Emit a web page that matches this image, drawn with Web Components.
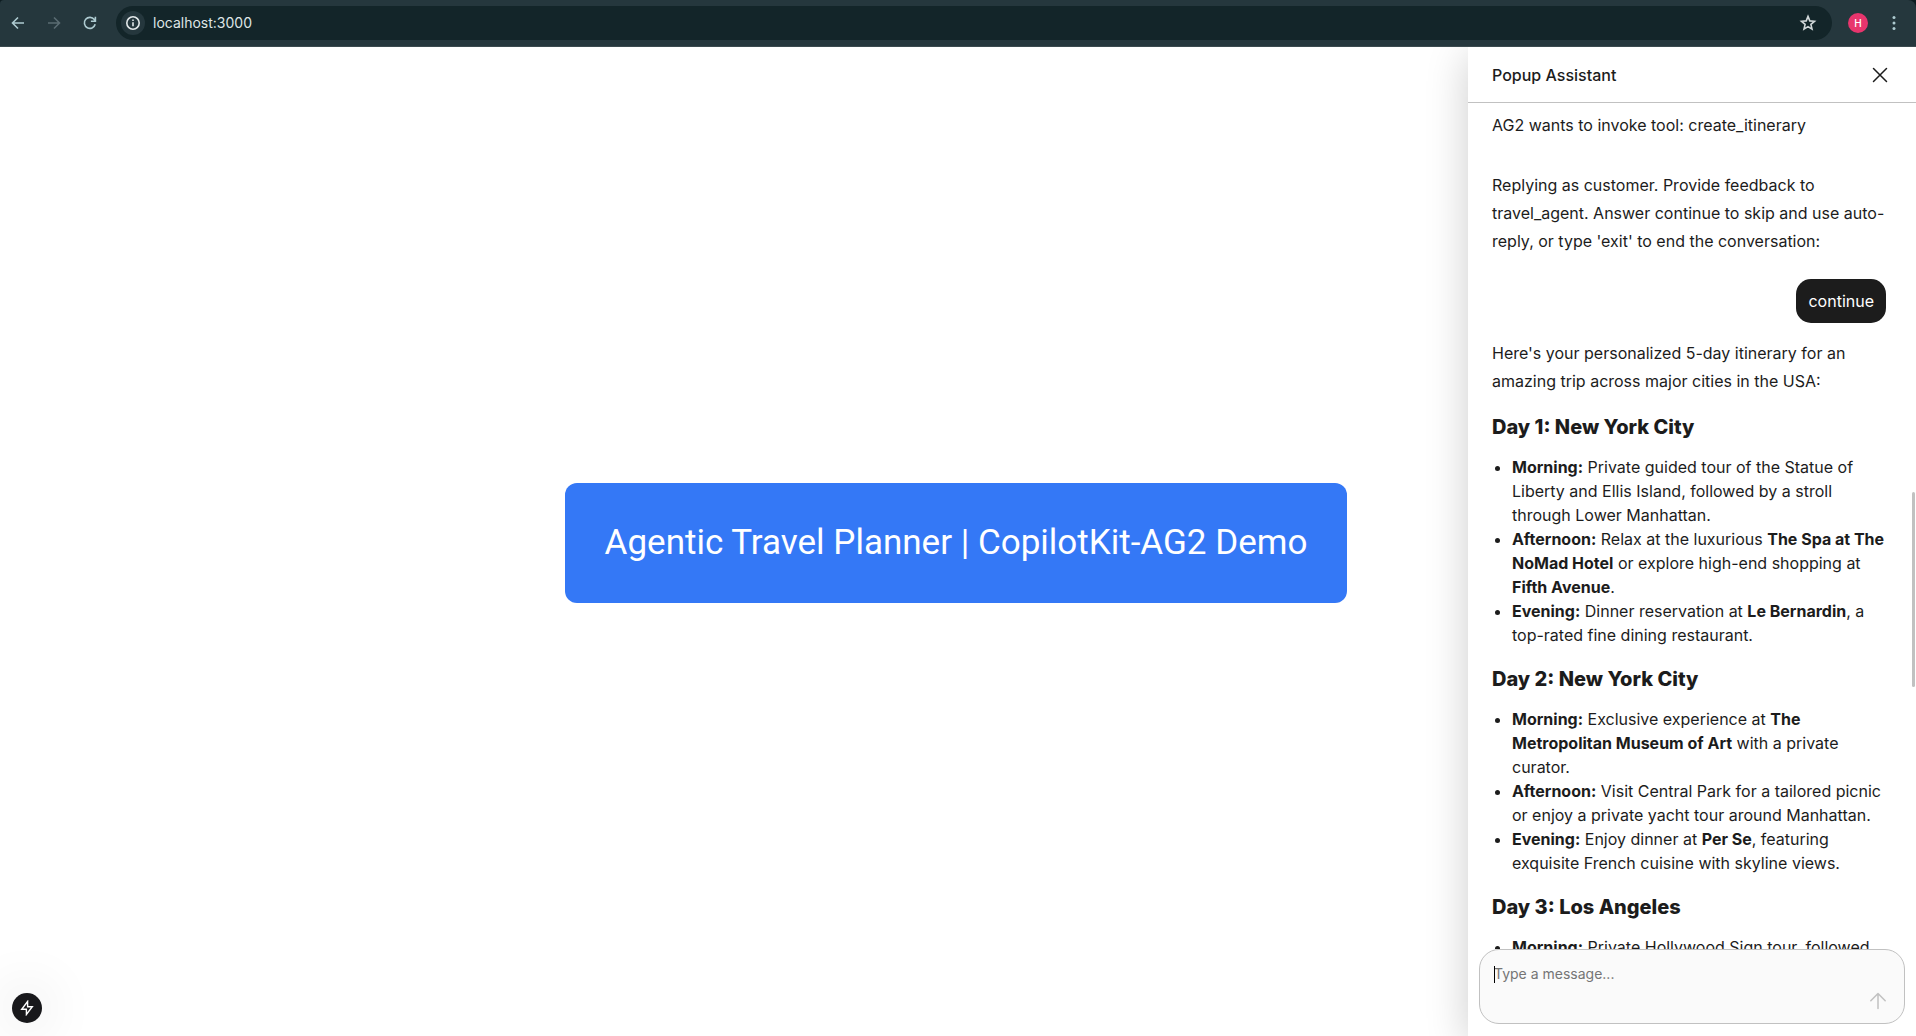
<!DOCTYPE html>
<html lang="en">
<head>
<meta charset="utf-8">
<title>localhost:3000</title>
<style>
html, body { height: 100%; }
body { margin: 0; font-family: Inter, "Liberation Sans", sans-serif; color: #1c1c1c; background: #fff; }
</style>
</head>
<body>
<app-window></app-window>
<script>
const define = (name, html) => {
  const template = document.createElement('template');
  template.innerHTML = html;
  customElements.define(name, class extends HTMLElement {
    constructor() {
      super();
      this.attachShadow({ mode: 'open' }).append(template.content.cloneNode(true));
    }
  });
};

define('browser-bar', `
<style>
:host { display: block; background: #0d1c20; }
.bar { display: flex; align-items: center; height: 47px; box-sizing: border-box; padding: 0 12px 1px 8px; background: #25373d; border-bottom: 1px solid #3b4a4f; border-radius: 4px 8px 0 0; color: #aecbd1; }
button { border: 0; padding: 0; background: none; color: inherit; display: grid; place-items: center; width: 20px; height: 20px; }
nav { display: flex; gap: 16px; }
button:disabled { color: #5a6c72; }
.address { flex: 1; display: flex; align-items: center; height: 34px; margin-left: 16px; padding: 0 14px 0 5px; border-radius: 17px; background: #132529; box-sizing: border-box; }
.info { width: 24px; height: 24px; border-radius: 50%; background: #25373d; color: #e3e9ea; }
input { flex: 1; min-width: 0; border: 0; outline: 0; background: none; color: #dfe5e6; font-family: inherit; font-size: 14px; padding: 0 8px; margin: 0; height: 20px; }
.star { color: #d2d8d9; }
.avatar { width: 20px; height: 20px; border-radius: 50%; background: #e8356d; color: #fff; font: 500 10px/20px Inter, sans-serif; margin: 0 16px 0 16px; }
svg { display: block; fill: none; stroke: currentColor; stroke-width: 1.6; }
</style>
<div class="bar">
<nav aria-label="History">
<button aria-label="Back"><svg width="16" height="16" viewBox="0 0 16 16"><path d="M14 8H2.5M8 2.5 2.5 8 8 13.500"/></svg></button>
<button aria-label="Forward" disabled><svg width="16" height="16" viewBox="0 0 16 16"><path d="M2 8h11.500M8 2.500 13.500 8 8 13.500"/></svg></button>
<button aria-label="Reload"><svg width="16" height="16" viewBox="0 0 16 16"><path d="M13.200 9.300A5.500 5.500 0 1 1 12.300 4.600L13 5.500M13.400 1.800v4.500H8.900"/></svg></button>
</nav>
<div class="address">
<button class="info" aria-label="Site information"><svg width="16" height="16" viewBox="0 0 16 16"><circle cx="8" cy="8" r="6.200"/><path d="M8 7.200v4M8 4.500v1.600"/></svg></button>
<input aria-label="Address" value="localhost:3000">
<button class="star" aria-label="Bookmark"><svg width="18" height="18" viewBox="0 0 18 18"><path d="m9 2.400 1.800 4.500 4.700.4-3.600 3.100 1.100 4.700L9 12.600l-4 2.500 1.100-4.700-3.600-3.100 4.700-.4z"/></svg></button>
</div>
<button class="avatar" aria-label="Profile">H</button>
<button aria-label="Menu"><svg width="16" height="16" viewBox="0 0 16 16"><g fill="currentColor" stroke="none"><circle cx="8" cy="2.600" r="1.500"/><circle cx="8" cy="8" r="1.500"/><circle cx="8" cy="13.400" r="1.500"/></g></svg></button>
</div>
`);

define('hero-banner', `
<style>
:host { display: block; padding: 40px; border-radius: 12px; background: #3478f6; color: #fff; }
h1 { margin: 0; font-family: Roboto, Inter, sans-serif; font-size: 35px; line-height: 40px; font-weight: 400; white-space: nowrap; }
</style>
<h1><slot></slot></h1>
`);

define('dev-indicator', `
<style>
:host { display: block; border-radius: 50%; box-shadow: 0 0 56px rgba(0,0,0,.2); }
button { display: grid; place-items: center; width: 30px; height: 30px; padding: 0; border: 0; border-radius: 50%; background: #18181b; color: #fff; }
svg { display: block; }
</style>
<button aria-label="Route status"><svg width="16" height="16" viewBox="0 0 16 16" fill="none" stroke="currentColor" stroke-width="1.400"><path d="M8.600 1.500 2.700 9.200h4.700v5.300l5.900-7.700H8.600z"/></svg></button>
`);

define('chat-text', `
<style>
:host { display: block; font-size: 16px; line-height: 28px; }
p { margin: 0; }
</style>
<p><slot></slot></p>
`);

define('chat-bubble', `
<style>
:host { display: block; align-self: flex-end; padding: 8px 12px; border-radius: 15px; background: #1c1c1c; color: #fff; font-size: 16px; line-height: 28px; font-weight: 400; }
</style>
<slot></slot>
`);

define('day-plan', `
<style>
:host { display: block; padding-top: 18px; }
h2 { margin: 0 0 14px; font-size: 20px; line-height: 28px; font-weight: 800; }
ul { margin: 0; padding: 0 0 0 20px; font-size: 16px; line-height: 24px; }
</style>
<h2><slot name="title"></slot></h2>
<ul><slot></slot></ul>
`);

define('message-box', `
<style>
:host { display: block; padding: 0 11px 12px; }
form { position: relative; display: flex; align-items: flex-end; height: 75px; box-sizing: border-box; padding: 12px 16px 10px 14px; border: 1px solid #c1c1c1; border-radius: 20px; background: #fafafa; }
textarea { flex: 1; align-self: stretch; min-width: 0; border: 0; outline: 0; padding: 0; resize: none; background: none; color: #1c1c1c; font-family: inherit; font-size: 14px; line-height: 24px; caret-color: transparent; }
textarea::placeholder { color: #757575; opacity: 1; }
.caret { position: absolute; left: 14px; top: 16px; width: 1px; height: 17px; background: #000; }
button { display: grid; place-items: center; width: 20px; height: 24px; border: 0; padding: 0; background: none; color: #c1c1c1; }
</style>
<form>
<textarea aria-label="Message" placeholder="Type a message..."></textarea>
<span class="caret"></span>
<button type="button" aria-label="Send"><svg width="18" height="18" viewBox="0 0 18 18" fill="none" stroke="currentColor" stroke-width="1.500" stroke-linecap="round" stroke-linejoin="round"><path d="M9 16.500V1.500M1.800 8.700 9 1.500l7.200 7.200"/></svg></button>
</form>
`);

define('assistant-panel', `
<style>
:host { display: flex; flex-direction: column; background: #fff; box-shadow: 0 8px 40px rgba(0,0,0,.2); }
header { display: flex; align-items: center; justify-content: space-between; height: 56px; box-sizing: border-box; padding: 0 26px 0 24px; border-bottom: 1px solid #c1c1c1; font-size: 16px; line-height: 24px; font-weight: 500; }
header button { display: grid; place-items: center; width: 20px; height: 20px; border: 0; padding: 0; background: none; color: #1c1c1c; }
.log { position: relative; flex: 1; min-height: 0; overflow: hidden; }
.messages { display: flex; flex-direction: column; padding: 8px 30px 0 24px; }
.gap { margin-top: 32px; }
chat-bubble { margin: 24px 0 16px; }
.thumb { position: absolute; right: 1px; top: 46%; width: 3px; height: 23%; border-radius: 2px; background: #c1c1c1; }
</style>
<header>Popup Assistant<button aria-label="Close"><svg width="16" height="16" viewBox="0 0 16 16" fill="none" stroke="currentColor" stroke-width="1.500" stroke-linecap="round"><path d="m1.500 1.500 13 13m0-13-13 13"/></svg></button></header>
<div class="log">
<div class="messages">
<chat-text>AG2 wants to invoke tool: create_itinerary</chat-text>
<chat-text class="gap">Replying as customer. Provide feedback to travel_agent. Answer continue to skip and use auto-reply, or type 'exit' to end the conversation:</chat-text>
<chat-bubble>continue</chat-bubble>
<chat-text>Here's your personalized 5-day itinerary for an amazing trip across major cities in the USA:</chat-text>
<day-plan><span slot="title">Day 1: New York City</span>
<li><strong>Morning:</strong> Private guided tour of the Statue of Liberty and Ellis Island, followed by a stroll through Lower Manhattan.</li>
<li><strong>Afternoon:</strong> Relax at the luxurious <strong>The Spa at The NoMad Hotel</strong> or explore high-end shopping at <strong>Fifth Avenue</strong>.</li>
<li><strong>Evening:</strong> Dinner reservation at <strong>Le Bernardin</strong>, a top-rated fine dining restaurant.</li>
</day-plan>
<day-plan><span slot="title">Day 2: New York City</span>
<li><strong>Morning:</strong> Exclusive experience at <strong>The Metropolitan Museum of Art</strong> with a private curator.</li>
<li><strong>Afternoon:</strong> Visit Central Park for a tailored picnic or enjoy a private yacht tour around Manhattan.</li>
<li><strong>Evening:</strong> Enjoy dinner at <strong>Per Se</strong>, featuring exquisite French cuisine with skyline views.</li>
</day-plan>
<day-plan><span slot="title">Day 3: Los Angeles</span>
<li><strong>Morning:</strong> Private Hollywood Sign tour, followed</li>
</day-plan>
</div>
<div class="thumb"></div>
</div>
<message-box></message-box>
`);

define('app-window', `
<style>
:host { display: flex; flex-direction: column; height: 100vh; overflow: hidden; }
main { position: relative; flex: 1; min-height: 0; display: grid; place-items: center; overflow: hidden; padding: 2px 4px 0 0; }
assistant-panel { position: absolute; top: 0; right: 0; bottom: 0; width: 448px; }
dev-indicator { position: absolute; left: 12px; bottom: 13px; }
</style>
<browser-bar></browser-bar>
<main>
<hero-banner>Agentic Travel Planner | CopilotKit-AG2 Demo</hero-banner>
<dev-indicator></dev-indicator>
<assistant-panel></assistant-panel>
</main>
`);
</script>
</body>
</html>
